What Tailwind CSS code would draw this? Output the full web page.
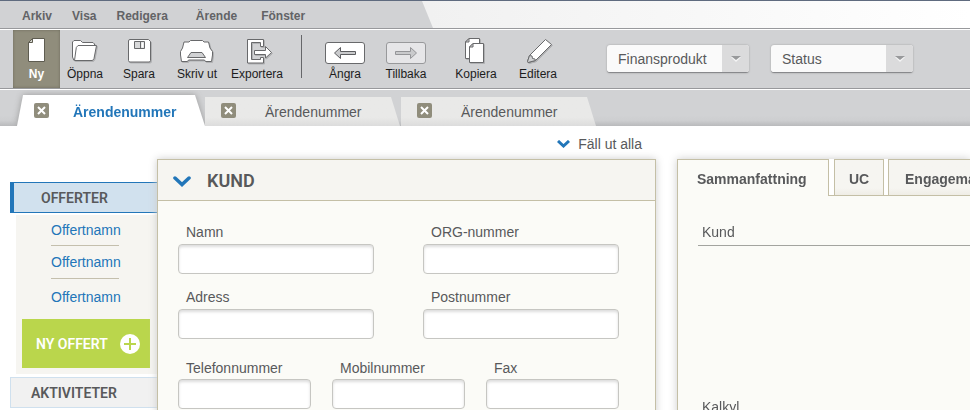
<!DOCTYPE html>
<html lang="sv">
<head>
<meta charset="utf-8">
<meta name="viewport" content="width=device-width, initial-scale=1">
<title>Ärendenummer</title>
<script src="https://cdn.jsdelivr.net/npm/@tailwindcss/browser@4"></script>
</head>
<body class="flex h-screen flex-col overflow-hidden bg-white font-['Liberation_Sans',Arial,sans-serif] text-sm text-[#58595b]">

<!-- Menu bar -->
<header class="border-t border-[#5f6b7f] bg-linear-to-r from-[#e6e6e6] to-white">
  <nav aria-label="Huvudmeny" class="flex h-[27px] w-[433px] items-center gap-5 bg-[#d1d2d4] pt-[3px] pl-[22px] text-xs font-bold text-[#626366] [clip-path:polygon(0_0,422px_0,100%_100%,0_100%)]">
    <a href="#">Arkiv</a>
    <a href="#">Visa</a>
    <a href="#" class="mr-2">Redigera</a>
    <a href="#" class="mr-1">Ärende</a>
    <a href="#">Fönster</a>
  </nav>
</header>

<!-- Toolbar -->
<div role="toolbar" aria-label="Verktyg" class="flex h-[61px] shrink-0 border-y border-[#98999c] bg-[#d1d2d4] pl-[13px] text-xs leading-4 text-[#1c1c1c] shadow-[inset_0_1px_0_#fff]">
  <button class="mt-px flex w-[47px] flex-col items-center gap-0.5 bg-[#908d7c] pt-2 font-bold text-white shadow-[inset_0_0_3px_#6c6a5c]">
    <svg width="47" height="26" viewBox="13 38 47 26" aria-hidden="true">
      <path d="M32.500 38.500H44.500V61.500H28.500V42.500z" fill="#fff" stroke="#5e5c50"/>
      <path d="M32.500 38.500V42.500H28.500z" fill="#d1d1cb" stroke="#5e5c50"/>
    </svg>
    Ny
  </button>
  <button class="mt-px flex w-[50px] flex-col items-center gap-0.5 pt-2">
    <svg class="drop-shadow-[1px_1px_0_#b0b1b3]" width="50" height="26" viewBox="60 38 50 26" aria-hidden="true" fill="#fff" stroke="#68696b" stroke-linejoin="round">
      <path d="M74 60.500L72.500 57V42L74 40.500H80.500L82.500 42.500H93L94.500 44V46"/>
      <path d="M74.500 60.500L76.300 47.500L78 45.500H96.500L94 58.500L92.500 60.500z"/>
    </svg>
    Öppna
  </button>
  <button class="mt-px flex w-[58px] flex-col items-center gap-0.5 pt-2">
    <svg class="drop-shadow-[1px_1px_0_#b0b1b3]" width="58" height="26" viewBox="110 38 58 26" aria-hidden="true" fill="#fff" stroke="#68696b">
      <path d="M130 39.500H148.500L150.500 41.500V60.500Q150.500 62 149 62H130Q128.500 62 128.500 60.500V41Q128.500 39.500 130 39.500z"/>
      <path d="M134.500 41.500H144.500V48.500H134.500z" fill="#d8d9da"/>
      <path d="M140.500 42V48"/>
      <path d="M141.500 42.500H143.500V47.500H141.500z" fill="#fff" stroke="none"/>
    </svg>
    Spara
  </button>
  <button class="mt-px flex w-[58px] flex-col items-center gap-0.5 pt-2">
    <svg class="drop-shadow-[1px_1px_0_#b0b1b3]" width="58" height="26" viewBox="168 38 58 26" aria-hidden="true" fill="#fff" stroke="#68696b" stroke-linejoin="round">
      <path d="M190.500 40.500H202.500L204 42H208.500L210 48L212.500 51.500V55L211.500 61.500H205.500L204.500 60H188.500L187.500 61.500H181.500L180.500 55V51.500L182.500 48L184 42H189z"/>
      <path d="M191 52.500H202L205.500 57.500H187.500z" fill="#d1d2d4"/>
    </svg>
    Skriv ut
  </button>
  <button class="mt-px flex w-[62px] flex-col items-center gap-0.5 pt-2">
    <svg class="drop-shadow-[1px_1px_0_#b0b1b3]" width="62" height="26" viewBox="226 38 62 26" aria-hidden="true" fill="#fff" stroke="#68696b">
      <path d="M247.500 39.500H263.500V46.500H260.500V42.500H251.500V59.500H260.500V57.500H263.500V63H247.500z"/>
      <path d="M254.500 50.500H265.500V46.500L271.500 52.500L265.500 58V54.500H254.500z"/>
    </svg>
    Exportera
  </button>
  <div class="mt-1.5 ml-[13px] h-[43px] w-px bg-[#66676a]"></div>
  <button class="mt-px ml-3.5 flex w-[58px] flex-col items-center gap-0.5 pt-2">
    <svg width="58" height="26" viewBox="316 38 58 26" aria-hidden="true">
      <rect x="325.500" y="42.500" width="39" height="21" rx="2.500" fill="#fff" stroke="#68696b"/>
      <path d="M334.500 53L340.500 47.500V51.500H355.500V54.500H340.500V58.500z" fill="#c9cacc" stroke="#5c5d60"/>
    </svg>
    Ångra
  </button>
  <button class="mt-px flex w-16 flex-col items-center gap-0.5 pt-2">
    <svg width="64" height="26" viewBox="374 38 64 26" aria-hidden="true">
      <rect x="386.500" y="42.500" width="39" height="21" rx="2.500" fill="#e6e6e8" stroke="#98999b"/>
      <path d="M416.500 53L410.500 47.500V51.500H395.500V54.500H410.500V58.500z" fill="#c9cacc" stroke="#949598"/>
    </svg>
    Tillbaka
  </button>
  <button class="mt-px ml-[7px] flex w-[62px] flex-col items-center gap-0.5 pt-2">
    <svg class="drop-shadow-[1px_1px_0_#b0b1b3]" width="62" height="26" viewBox="445 38 62 26" aria-hidden="true" fill="#fff" stroke="#68696b">
      <path d="M469 38.500H479.500V58.500H465.500V42z"/>
      <path d="M469 38.500V42H465.500z" fill="#d1d2d4"/>
      <path d="M473 43.500H483.500V62.500H469.500V47z"/>
      <path d="M473 43.500V47H469.500z" fill="#d1d2d4"/>
    </svg>
    Kopiera
  </button>
  <button class="mt-px flex w-[62px] flex-col items-center gap-0.5 pt-2">
    <svg class="drop-shadow-[1px_1px_0_#b0b1b3]" width="62" height="26" viewBox="507 38 62 26" aria-hidden="true" fill="#fff" stroke="#68696b" stroke-linejoin="round">
      <path d="M545.500 39.500L551.500 44.500L535.500 60.500L528 62.500L527.500 61.500L529.500 55.500z"/>
      <path d="M529.500 55.500L532 56L532.500 58.500L535 59L535.500 60.500L528 62.500L527.500 61.500z" fill="#d1d2d4"/>
    </svg>
    Editera
  </button>
  <div class="mt-4 ml-[38px] flex gap-[22px] text-sm">
    <div class="relative h-7 w-[142px] overflow-hidden rounded-[3px] border-b border-[#88898c] bg-[#fafafa] shadow-[0_0_2px_#999]">
      <select aria-label="Finansprodukt" class="h-full w-full appearance-none pl-[11px] text-[#58595b]"><option>Finansprodukt</option></select>
      <span class="pointer-events-none absolute inset-y-0 right-0 flex w-[27px] items-center justify-center bg-[#dbdbdc]">
        <svg width="10" height="7" viewBox="0 0 10 7" aria-hidden="true"><path d="M0 2H10L5 7z" fill="#f5f5f5"/><path d="M0 1H10L5 5z" fill="#98999b"/></svg>
      </span>
    </div>
    <div class="relative h-7 w-[142px] overflow-hidden rounded-[3px] border-b border-[#88898c] bg-[#fafafa] shadow-[0_0_2px_#999]">
      <select aria-label="Status" class="h-full w-full appearance-none pl-[11px] text-[#58595b]"><option>Status</option></select>
      <span class="pointer-events-none absolute inset-y-0 right-0 flex w-[27px] items-center justify-center bg-[#dbdbdc]">
        <svg width="10" height="7" viewBox="0 0 10 7" aria-hidden="true"><path d="M0 2H10L5 7z" fill="#f5f5f5"/><path d="M0 1H10L5 5z" fill="#98999b"/></svg>
      </span>
    </div>
  </div>
</div>

<!-- Document tabs -->
<div class="flex h-[37px] shrink-0 items-end overflow-hidden border-t border-white bg-linear-to-t from-[#b9babc] via-[#cdced0] via-15% to-[#d1d2d4] to-30% pl-[17px]">
  <div class="drop-shadow-[0_0_3px_#999]">
    <div class="flex h-[31px] w-[188px] items-center bg-white pt-0.5 pl-[17px] [clip-path:polygon(6px_0,178px_0,100%_100%,0_100%)]">
      <button aria-label="Stäng" class="mb-0.5 flex size-[15px] items-center justify-center rounded-[2px] bg-[#908d7c]">
        <svg width="9" height="9" viewBox="0 0 9 9" aria-hidden="true"><path d="M1 1L8 8M8 1L1 8" stroke="#fff" stroke-width="2"/></svg>
      </button>
      <a href="#" class="ml-6 font-bold text-[#2276b9]">Ärendenummer</a>
    </div>
  </div>
  <div class="mr-px flex h-[29px] w-[195px] items-center bg-linear-to-t from-[#dcdcdc] to-[#e9e9e8] to-30% pl-4 [clip-path:polygon(0_0,186px_0,100%_100%,0_100%)]">
    <button aria-label="Stäng" class="mb-0.5 flex size-[15px] items-center justify-center rounded-[2px] bg-[#908d7c]">
      <svg width="9" height="9" viewBox="0 0 9 9" aria-hidden="true"><path d="M1 1L8 8M8 1L1 8" stroke="#fff" stroke-width="2"/></svg>
    </button>
    <a href="#" class="ml-[29px]">Ärendenummer</a>
  </div>
  <div class="flex h-[29px] w-[195px] items-center bg-linear-to-t from-[#dcdcdc] to-[#e9e9e8] to-30% pl-4 [clip-path:polygon(0_0,186px_0,100%_100%,0_100%)]">
    <button aria-label="Stäng" class="mb-0.5 flex size-[15px] items-center justify-center rounded-[2px] bg-[#908d7c]">
      <svg width="9" height="9" viewBox="0 0 9 9" aria-hidden="true"><path d="M1 1L8 8M8 1L1 8" stroke="#fff" stroke-width="2"/></svg>
    </button>
    <a href="#" class="ml-[29px]">Ärendenummer</a>
  </div>
</div>

<main class="grid flex-1 grid-cols-[147px_minmax(0,499fr)_21px_minmax(0,293fr)] pl-2.5">

  <!-- Side navigation -->
  <aside class="pt-14">
    <a href="#" class="flex h-[31px] items-center border-y border-l-4 border-[#2276b9] bg-[#d1e1ee] pl-[27px] font-[Roboto,sans-serif] font-semibold">OFFERTER</a>
    <div class="mt-0.5 ml-1.5 bg-[#f6f5f1] pr-[7px] pb-1.5 pl-1.5 text-[#2276b9]">
      <ul class="pb-3 pl-[29px]">
        <li class="w-[68px] border-b border-[#c4bfad] pt-[5px] pb-[5px]"><a href="#">Offertnamn</a></li>
        <li class="w-[68px] border-b border-[#c4bfad] pt-1.5 pb-1.5"><a href="#">Offertnamn</a></li>
        <li class="w-[68px] pt-2"><a href="#">Offertnamn</a></li>
      </ul>
      <button class="flex h-[49px] w-full items-center justify-between bg-[#bad64c] pr-2.5 pl-3.5 font-[Roboto,sans-serif] font-semibold text-white">
        NY OFFERT
        <svg width="20" height="20" viewBox="0 0 20 20" aria-hidden="true"><circle cx="10" cy="10" r="10" fill="#fff"/><path d="M10 4V16M4 10H16" stroke="#bad64c" stroke-width="2"/></svg>
      </button>
    </div>
    <a href="#" class="mt-[3px] flex h-[31px] items-center border border-r-0 border-[#cfe0ee] bg-[#f1f1f1] pl-5 font-[Roboto,sans-serif] font-semibold">AKTIVITETER</a>
  </aside>

  <!-- Customer form -->
  <section class="relative flex flex-col">
    <div class="flex h-[33px] shrink-0 items-center justify-end pt-0.5 pr-3.5">
      <button class="flex items-center gap-2">
        <svg width="13" height="8" viewBox="0 0 13 8" aria-hidden="true"><path d="M1 1L6.500 6L12 1" fill="none" stroke="#2276b9" stroke-width="3"/></svg>
        Fäll ut alla
      </button>
    </div>
    <div class="flex-1 border border-b-0 border-[#c4bfa6] bg-[#fbfbf7] shadow-[0_0_8px_#ccc]">
      <h2 class="flex h-[41px] items-center gap-4 border-b border-[#c4bfa6] bg-[#f6f5f1] pt-0.5 pl-[15px] font-[Roboto,sans-serif] text-lg font-semibold">
        <svg width="18" height="11" viewBox="0 0 18 11" aria-hidden="true"><path d="M2 2L9 8.500L16 2" fill="none" stroke="#2276b9" stroke-width="3.500" stroke-linecap="round"/></svg>
        KUND
      </h2>
      <form class="pt-[21px] pr-9 pl-5">
        <div class="grid grid-cols-2 gap-x-[49px] gap-y-[13px]">
          <div><label for="namn" class="block h-[22px] pl-2">Namn</label><input id="namn" class="block h-[30px] w-full rounded-[4px] border border-[#c6c6c2] bg-white px-2 shadow-[inset_0_2px_3px_#ddd]"></div>
          <div><label for="org" class="block h-[22px] pl-2">ORG-nummer</label><input id="org" class="block h-[30px] w-full rounded-[4px] border border-[#c6c6c2] bg-white px-2 shadow-[inset_0_2px_3px_#ddd]"></div>
          <div><label for="adress" class="block h-[22px] pl-2">Adress</label><input id="adress" class="block h-[30px] w-full rounded-[4px] border border-[#c6c6c2] bg-white px-2 shadow-[inset_0_2px_3px_#ddd]"></div>
          <div><label for="post" class="block h-[22px] pl-2">Postnummer</label><input id="post" class="block h-[30px] w-full rounded-[4px] border border-[#c6c6c2] bg-white px-2 shadow-[inset_0_2px_3px_#ddd]"></div>
        </div>
        <div class="mt-[19px] grid grid-cols-3 gap-x-[21px]">
          <div><label for="tel" class="block h-[21px] pl-2">Telefonnummer</label><input id="tel" class="block h-[30px] w-full rounded-[4px] border border-[#c6c6c2] bg-white px-2 shadow-[inset_0_2px_3px_#ddd]"></div>
          <div><label for="mobil" class="block h-[21px] pl-2">Mobilnummer</label><input id="mobil" class="block h-[30px] w-full rounded-[4px] border border-[#c6c6c2] bg-white px-2 shadow-[inset_0_2px_3px_#ddd]"></div>
          <div><label for="fax" class="block h-[21px] pl-2">Fax</label><input id="fax" class="block h-[30px] w-full rounded-[4px] border border-[#c6c6c2] bg-white px-2 shadow-[inset_0_2px_3px_#ddd]"></div>
        </div>
      </form>
    </div>
  </section>

  <!-- Summary -->
  <section class="col-start-4 flex flex-col pt-[33px] drop-shadow-[0_0_4px_#ccc]">
    <div class="flex h-[37px] shrink-0 overflow-hidden font-bold">
      <a href="#" class="flex w-[152px] shrink-0 items-center border border-b-0 border-[#c4bfa6] bg-[#fbfbf7] pt-0.5 pl-[19px]">Sammanfattning</a>
      <div class="flex flex-1 gap-1 border-b border-[#c4bfa6] bg-white pl-[5px]">
        <a href="#" class="flex w-[50px] shrink-0 items-center justify-center border border-b-0 border-[#c4bfa6] bg-linear-to-t from-[#efede6] to-[#f6f5f1] to-20% pt-0.5">UC</a>
        <a href="#" class="flex shrink-0 items-center border border-b-0 border-[#c4bfa6] bg-linear-to-t from-[#efede6] to-[#f6f5f1] to-20% px-4 pt-0.5">Engagemang</a>
      </div>
    </div>
    <div class="flex-1 border-l border-[#c4bfa6] bg-[#fbfbf7] pt-[26px] pl-5">
      <h3 class="h-[155px] pl-1"><span class="block">Kund</span><span class="-ml-1 mt-[3px] block border-t border-[#a3a49f]"></span></h3>
      <h3 class="mt-5 pl-1">Kalkyl</h3>
    </div>
  </section>
</main>
</body>
</html>
